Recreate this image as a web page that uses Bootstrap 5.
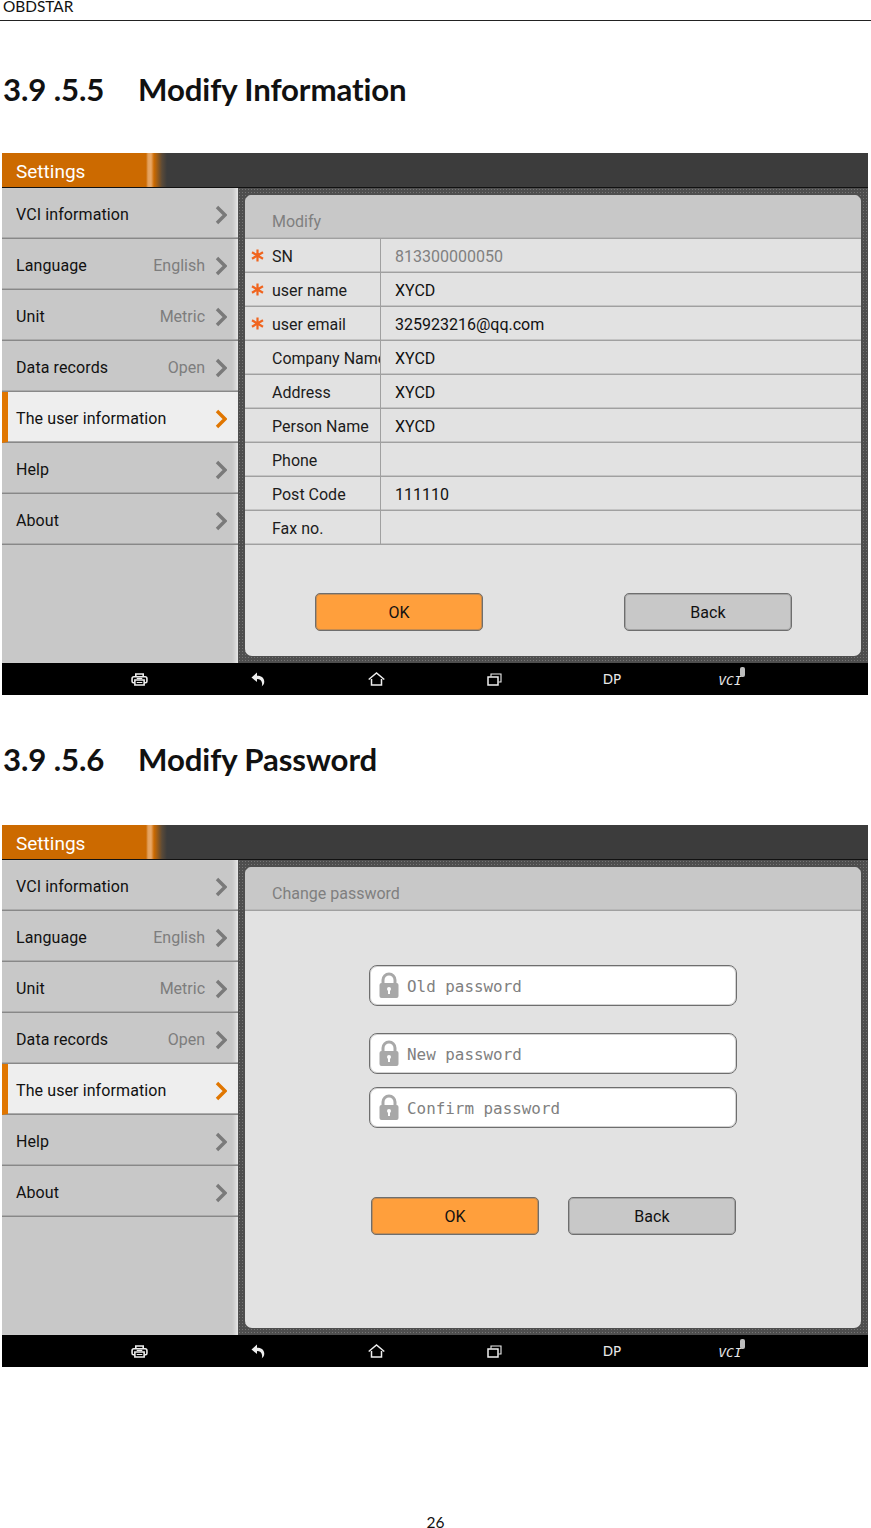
<!DOCTYPE html>
<html lang="en"><head><meta charset="utf-8"><title>OBDSTAR</title>
<link href="https://cdn.jsdelivr.net/npm/bootstrap@5.3.0/dist/css/bootstrap.min.css" rel="stylesheet">
<style>
html,body{margin:0;background:#fff}
body{width:871px;height:1528px;font-family:Lato,sans-serif;color:#000;overflow:hidden}
.doc-head{height:21px;border-bottom:1px solid #222;font-size:15.4px;line-height:12px;padding-left:3px;color:#111}
.doc-h{font-family:Lato,sans-serif;font-weight:700;font-size:31.2px;line-height:40px;margin:0;padding-left:3px;display:flex;letter-spacing:-.1px;color:#111}
.doc-h span:first-child{width:135px}
.h-one{margin-top:48px;height:84px}
.h-two{margin-top:44px;height:86px}
.tablet{margin-left:2px;width:866px;height:542px;display:flex;flex-direction:column;font-family:Roboto,sans-serif;font-size:16px;letter-spacing:.1px}
.tbar{height:35px;background:linear-gradient(90deg,#cc6a00 0,#cc6a00 144px,#e2a05c 146px,#e8a868 149px,#cc6a00 152px,#5a4a38 160px,#3c3c3c 165px);border-bottom:1px solid #111;color:#fff;font-size:19px;line-height:38px;padding-left:14px;flex:none;letter-spacing:0}
.tbody{flex:1;display:flex;min-height:0}
.side{width:236px;flex:none;background:#c8c8c8;box-shadow:inset -5px 0 4px -3px #eee}
.sitem{height:51px;border-bottom:1px solid #888;box-shadow:inset 0 -1px 0 #ababab;display:flex;align-items:center;padding:4px 11px 0 14px;color:#111}
.sitem em{font-style:normal;color:#7d7d7d;margin-left:auto;margin-right:10px;letter-spacing:0}
.sitem svg{flex:none}
.sitem .push{margin-left:auto}
.sactive{background:#eeeeee;border-left:6px solid #e07600;padding-left:8px;color:#111}
.main{flex:1;padding:7px;background-color:#4e4e4e;background-image:radial-gradient(circle,#747474 0.8px,transparent 1px);background-size:3px 3px}
.pane{height:100%;background:#e2e2e2;border-radius:7px;overflow:hidden;display:flex;flex-direction:column}
.phead{height:44px;flex:none;background:#c8c8c8;border-bottom:1px solid #a0a0a0;box-shadow:inset 0 -1px 0 #b8b8b8;color:#7f7f7f;padding:16px 0 0 27px;line-height:22px;letter-spacing:0}
.frow{height:34px;border-bottom:1px solid #a0a0a0;box-shadow:inset 0 -1px 0 #c4c4c4;display:flex;flex:none;align-items:stretch}
.flab{width:136px;flex:none;border-right:1px solid #a0a0a0;display:flex;align-items:center;overflow:hidden;white-space:nowrap;padding:3px 0 0 6px;color:#1c1c1c;letter-spacing:0}
.flab svg,.gap-star{width:13px;height:13px;flex:none;margin-right:8px}
.flab svg{margin-top:-3px}
.fval{padding-left:14px;line-height:35px;color:#111;letter-spacing:0}
.grey{color:#808080}
.ob{width:168px;height:38px;border:1px solid #6e6e6e;box-shadow:inset 0 0 0 1px rgba(110,110,110,.4);border-radius:5px;display:flex;align-items:center;justify-content:center;color:#111;font-size:16px;background:#c8c8c8;flex:none;padding-top:2px}
.ob-o{background:#ff9f3c}
.btns-a{margin-top:48px;padding-left:70px;gap:141px}
.btns-b{margin-top:69px;padding-left:126px;gap:29px}
.pw{width:368px;height:41px;background:#fff;border:1px solid #6e6e6e;box-shadow:inset 0 0 0 1px rgba(110,110,110,.3);border-radius:8px;margin-left:124px;display:flex;align-items:center;padding:3px 0 0 9px;font-family:"DejaVu Sans Mono","Liberation Mono",monospace;font-size:15.9px;color:#808080;letter-spacing:0}
.pw svg{margin-right:8px;flex:none;margin-top:-3px}
.pw1{margin-top:54px}.pw2{margin-top:27px}.pw3{margin-top:13px}
.nbar{height:32px;background:#000;flex:none;display:flex;align-items:center;padding-left:78px;color:#e8e8e8;font-family:"DejaVu Sans",sans-serif;font-size:13.500px;letter-spacing:0}
.nbar>div{width:118px;display:flex;justify-content:center;align-items:center}
.nbar>div:first-child{width:119px}
.vci{font-family:"DejaVu Sans Mono",monospace;font-style:italic;font-size:13px;position:relative;padding-top:3px}
.vci i{position:absolute;right:-3px;top:-1px;width:5px;height:10px;border-radius:2px;background:#bdbdbd}
.pageno{position:absolute;left:0;right:0;top:1513px;text-align:center;font-size:15.5px;line-height:18px;width:871px;color:#111}
</style></head><body>
<div class="doc-head">OBDSTAR</div>
<h2 class="doc-h h-one"><span>3.9 .5.5</span><span>Modify Information</span></h2>

<div class="tablet">
 <div class="tbar">Settings</div>
 <div class="tbody">
  <div class="side">
   <div class="sitem">VCI information<svg class="push" width="12" height="20" viewBox="0 0 12 20"><path d="M2 2l8 8-8 8" fill="none" stroke="#7a7a7a" stroke-width="3.4"/></svg></div>
   <div class="sitem">Language<em>English</em><svg width="12" height="20" viewBox="0 0 12 20"><path d="M2 2l8 8-8 8" fill="none" stroke="#7a7a7a" stroke-width="3.4"/></svg></div>
   <div class="sitem">Unit<em>Metric</em><svg width="12" height="20" viewBox="0 0 12 20"><path d="M2 2l8 8-8 8" fill="none" stroke="#7a7a7a" stroke-width="3.4"/></svg></div>
   <div class="sitem">Data records<em>Open</em><svg width="12" height="20" viewBox="0 0 12 20"><path d="M2 2l8 8-8 8" fill="none" stroke="#7a7a7a" stroke-width="3.4"/></svg></div>
   <div class="sitem sactive">The user information<svg class="push" width="12" height="20" viewBox="0 0 12 20"><path d="M2 2l8 8-8 8" fill="none" stroke="#e07600" stroke-width="3.4"/></svg></div>
   <div class="sitem">Help<svg class="push" width="12" height="20" viewBox="0 0 12 20"><path d="M2 2l8 8-8 8" fill="none" stroke="#7a7a7a" stroke-width="3.4"/></svg></div>
   <div class="sitem">About<svg class="push" width="12" height="20" viewBox="0 0 12 20"><path d="M2 2l8 8-8 8" fill="none" stroke="#7a7a7a" stroke-width="3.4"/></svg></div>
  </div>
  <div class="main"><div class="pane">
   <div class="phead">Modify</div>
   <div class="frow"><div class="flab"><svg viewBox="0 0 13 13"><path d="M6.5 .5v12M1 3.3l11 6.400M12 3.300L1 9.700" stroke="#f0641e" stroke-width="2.200"/></svg>SN</div><div class="fval grey">813300000050</div></div>
   <div class="frow"><div class="flab"><svg viewBox="0 0 13 13"><path d="M6.5 .5v12M1 3.3l11 6.400M12 3.300L1 9.700" stroke="#f0641e" stroke-width="2.200"/></svg>user name</div><div class="fval">XYCD</div></div>
   <div class="frow"><div class="flab"><svg viewBox="0 0 13 13"><path d="M6.5 .5v12M1 3.3l11 6.400M12 3.300L1 9.700" stroke="#f0641e" stroke-width="2.200"/></svg>user email</div><div class="fval">325923216@qq.com</div></div>
   <div class="frow"><div class="flab"><span class="gap-star"></span>Company Name</div><div class="fval">XYCD</div></div>
   <div class="frow"><div class="flab"><span class="gap-star"></span>Address</div><div class="fval">XYCD</div></div>
   <div class="frow"><div class="flab"><span class="gap-star"></span>Person Name</div><div class="fval">XYCD</div></div>
   <div class="frow"><div class="flab"><span class="gap-star"></span>Phone</div><div class="fval"></div></div>
   <div class="frow"><div class="flab"><span class="gap-star"></span>Post Code</div><div class="fval">111110</div></div>
   <div class="frow"><div class="flab"><span class="gap-star"></span>Fax no.</div><div class="fval"></div></div>
   <div class="d-flex btns-a"><div class="ob ob-o">OK</div><div class="ob">Back</div></div>
  </div></div>
 </div>
 <div class="nbar">
  <div><svg width="17" height="13" viewBox="0 0 18 14" fill="none" stroke="#eee" stroke-width="1.7"><path d="M5 4V1h8v3M4 10.500H2.500C1.500 10.500 1 10 1 9V6c0-1 1-2 2-2h12c1 0 2 1 2 2v3c0 1-.5 1.500-1.500 1.500H14"/><path d="M4 7.500h10v5.500H4z"/><path d="M6 5.800h6M6 10.300h6" stroke-width="1.200"/></svg></div>
  <div><svg width="14" height="15" viewBox="0 0 14 15"><path d="M6 0.500L0.500 5.500 6 10V7c3 0 4.500 1.500 5 4 .3 1.500 0 3-.5 3.500 2-1 3-3 2.700-5.500C12.800 5.500 10 3.800 6 3.800z" fill="#eee"/></svg></div>
  <div><svg width="17" height="14" viewBox="0 0 17 14" fill="none" stroke="#eee" stroke-width="1.500"><path d="M.7 7.500L8.500 1l7.800 6.500"/><path d="M3.500 7v6h10V7"/></svg></div>
  <div><svg width="15" height="13" viewBox="0 0 15 13" fill="none" stroke="#eee" stroke-width="1.500"><path d="M1 4h10v8H1z"/><path d="M4 3.500V1h10v8h-2.500" stroke-width="1.100"/></svg></div>
  <div>DP</div>
  <div><span class="vci">VCI<i></i></span></div>
 </div>
</div>

<h2 class="doc-h h-two"><span>3.9 .5.6</span><span>Modify Password</span></h2>

<div class="tablet">
 <div class="tbar">Settings</div>
 <div class="tbody">
  <div class="side">
   <div class="sitem">VCI information<svg class="push" width="12" height="20" viewBox="0 0 12 20"><path d="M2 2l8 8-8 8" fill="none" stroke="#7a7a7a" stroke-width="3.4"/></svg></div>
   <div class="sitem">Language<em>English</em><svg width="12" height="20" viewBox="0 0 12 20"><path d="M2 2l8 8-8 8" fill="none" stroke="#7a7a7a" stroke-width="3.4"/></svg></div>
   <div class="sitem">Unit<em>Metric</em><svg width="12" height="20" viewBox="0 0 12 20"><path d="M2 2l8 8-8 8" fill="none" stroke="#7a7a7a" stroke-width="3.4"/></svg></div>
   <div class="sitem">Data records<em>Open</em><svg width="12" height="20" viewBox="0 0 12 20"><path d="M2 2l8 8-8 8" fill="none" stroke="#7a7a7a" stroke-width="3.4"/></svg></div>
   <div class="sitem sactive">The user information<svg class="push" width="12" height="20" viewBox="0 0 12 20"><path d="M2 2l8 8-8 8" fill="none" stroke="#e07600" stroke-width="3.4"/></svg></div>
   <div class="sitem">Help<svg class="push" width="12" height="20" viewBox="0 0 12 20"><path d="M2 2l8 8-8 8" fill="none" stroke="#7a7a7a" stroke-width="3.4"/></svg></div>
   <div class="sitem">About<svg class="push" width="12" height="20" viewBox="0 0 12 20"><path d="M2 2l8 8-8 8" fill="none" stroke="#7a7a7a" stroke-width="3.4"/></svg></div>
  </div>
  <div class="main"><div class="pane">
   <div class="phead">Change password</div>
   <div class="pw pw1"><svg width="20" height="27" viewBox="0 0 20 27"><path d="M4 12V8a6 6 0 0 1 12 0v4" fill="none" stroke="#a8a8a8" stroke-width="3"/><rect x=".5" y="11" width="19" height="15" rx="2" fill="#a8a8a8"/><circle cx="10" cy="17" r="2" fill="#fff"/><rect x="9" y="17" width="2" height="5" fill="#fff"/></svg>Old password</div>
   <div class="pw pw2"><svg width="20" height="27" viewBox="0 0 20 27"><path d="M4 12V8a6 6 0 0 1 12 0v4" fill="none" stroke="#a8a8a8" stroke-width="3"/><rect x=".5" y="11" width="19" height="15" rx="2" fill="#a8a8a8"/><circle cx="10" cy="17" r="2" fill="#fff"/><rect x="9" y="17" width="2" height="5" fill="#fff"/></svg>New password</div>
   <div class="pw pw3"><svg width="20" height="27" viewBox="0 0 20 27"><path d="M4 12V8a6 6 0 0 1 12 0v4" fill="none" stroke="#a8a8a8" stroke-width="3"/><rect x=".5" y="11" width="19" height="15" rx="2" fill="#a8a8a8"/><circle cx="10" cy="17" r="2" fill="#fff"/><rect x="9" y="17" width="2" height="5" fill="#fff"/></svg>Confirm password</div>
   <div class="d-flex btns-b"><div class="ob ob-o">OK</div><div class="ob">Back</div></div>
  </div></div>
 </div>
 <div class="nbar">
  <div><svg width="17" height="13" viewBox="0 0 18 14" fill="none" stroke="#eee" stroke-width="1.7"><path d="M5 4V1h8v3M4 10.500H2.500C1.500 10.500 1 10 1 9V6c0-1 1-2 2-2h12c1 0 2 1 2 2v3c0 1-.5 1.500-1.500 1.500H14"/><path d="M4 7.500h10v5.500H4z"/><path d="M6 5.800h6M6 10.300h6" stroke-width="1.200"/></svg></div>
  <div><svg width="14" height="15" viewBox="0 0 14 15"><path d="M6 0.500L0.500 5.500 6 10V7c3 0 4.500 1.500 5 4 .3 1.500 0 3-.5 3.500 2-1 3-3 2.700-5.500C12.800 5.500 10 3.800 6 3.800z" fill="#eee"/></svg></div>
  <div><svg width="17" height="14" viewBox="0 0 17 14" fill="none" stroke="#eee" stroke-width="1.500"><path d="M.7 7.500L8.500 1l7.800 6.500"/><path d="M3.500 7v6h10V7"/></svg></div>
  <div><svg width="15" height="13" viewBox="0 0 15 13" fill="none" stroke="#eee" stroke-width="1.500"><path d="M1 4h10v8H1z"/><path d="M4 3.500V1h10v8h-2.500" stroke-width="1.100"/></svg></div>
  <div>DP</div>
  <div><span class="vci">VCI<i></i></span></div>
 </div>
</div>
<div class="pageno">26</div>
<script src="https://cdn.jsdelivr.net/npm/bootstrap@5.3.0/dist/js/bootstrap.bundle.min.js"></script>
</body></html>
